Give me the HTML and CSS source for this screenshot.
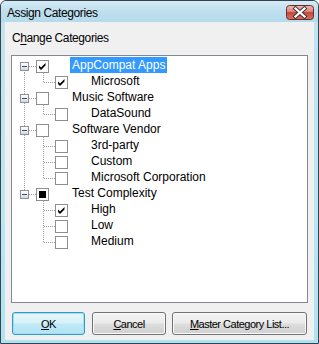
FILE: index.html
```html
<!DOCTYPE html>
<html>
<head>
<meta charset="utf-8">
<title>Assign Categories</title>
<link rel="stylesheet" href="styles.css">
</head>
<body>
<div class="window">
  <div class="titlebar">
    <span class="title">Assign Categories</span>
    <span class="close">
      <svg width="28" height="15" viewBox="0 0 28 15">
        <defs>
          <linearGradient id="rg" x1="0" y1="0" x2="0" y2="1">
            <stop offset="0" stop-color="#f0bbb3"/>
            <stop offset="0.45" stop-color="#dc8378"/>
            <stop offset="0.5" stop-color="#c84a3e"/>
            <stop offset="1" stop-color="#d8705f"/>
          </linearGradient>
        </defs>
        <rect x="0.5" y="0.5" width="27" height="14" rx="3" ry="3" fill="url(#rg)" stroke="#6e2b27"/>
        <path d="M9.5 3.5 L18.5 11.5 M18.5 3.5 L9.5 11.5" stroke="#4a3a3a" stroke-width="4.2" stroke-linecap="square" fill="none"/>
        <path d="M9.5 3.5 L18.5 11.5 M18.5 3.5 L9.5 11.5" stroke="#ffffff" stroke-width="2.2" stroke-linecap="square" fill="none"/>
      </svg>
    </span>
  </div>
  <div class="client">
    <div class="label">C<u>h</u>ange Categories</div>
    <div class="tree">
      <div class="row">
        <span class="ga first"><span class="exp"></span></span>
        <span class="cb"><svg class="chk" width="11" height="11" viewBox="0 0 11 11"><polygon points="2,4.5 4,6.5 8.5,2 8.5,4.5 4,9 2,7"/></svg></span>
        <span class="txt sel">AppCompat Apps</span>
      </div>
      <div class="row">
        <span class="ga cont"></span>
        <span class="gb last"></span>
        <span class="cb"><svg class="chk" width="11" height="11" viewBox="0 0 11 11"><polygon points="2,4.5 4,6.5 8.5,2 8.5,4.5 4,9 2,7"/></svg></span>
        <span class="txt">Microsoft</span>
      </div>
      <div class="row">
        <span class="ga mid"><span class="exp"></span></span>
        <span class="cb"></span>
        <span class="txt">Music Software</span>
      </div>
      <div class="row">
        <span class="ga cont"></span>
        <span class="gb last"></span>
        <span class="cb"></span>
        <span class="txt">DataSound</span>
      </div>
      <div class="row">
        <span class="ga mid"><span class="exp"></span></span>
        <span class="cb"></span>
        <span class="txt">Software Vendor</span>
      </div>
      <div class="row">
        <span class="ga cont"></span>
        <span class="gb mid"></span>
        <span class="cb"></span>
        <span class="txt">3rd-party</span>
      </div>
      <div class="row">
        <span class="ga cont"></span>
        <span class="gb mid"></span>
        <span class="cb"></span>
        <span class="txt">Custom</span>
      </div>
      <div class="row">
        <span class="ga cont"></span>
        <span class="gb last"></span>
        <span class="cb"></span>
        <span class="txt">Microsoft Corporation</span>
      </div>
      <div class="row">
        <span class="ga last"><span class="exp"></span></span>
        <span class="cb"><span class="ind"></span></span>
        <span class="txt">Test Complexity</span>
      </div>
      <div class="row">
        <span class="ga"></span>
        <span class="gb mid"></span>
        <span class="cb"><svg class="chk" width="11" height="11" viewBox="0 0 11 11"><polygon points="2,4.5 4,6.5 8.5,2 8.5,4.5 4,9 2,7"/></svg></span>
        <span class="txt">High</span>
      </div>
      <div class="row">
        <span class="ga"></span>
        <span class="gb mid"></span>
        <span class="cb"></span>
        <span class="txt">Low</span>
      </div>
      <div class="row">
        <span class="ga"></span>
        <span class="gb last"></span>
        <span class="cb"></span>
        <span class="txt">Medium</span>
      </div>
    </div>
    <div class="buttons">
      <span class="btn default ok"><u>O</u>K</span>
      <span class="btn cancel"><u>C</u>ancel</span>
      <span class="btn master"><u>M</u>aster Category List...</span>
    </div>
  </div>
</div>
</body>
</html>
```
FILE: styles.css
```css
:root {
  --d: #a0a0a0;
  --hA: repeating-linear-gradient(90deg, var(--d) 0 1px, transparent 1px 2px) 17px 9px / 7px 1px no-repeat;
  --vAfull: repeating-linear-gradient(180deg, var(--d) 0 1px, transparent 1px 2px) 12px 0 / 1px 16px no-repeat;
  --vAtop: repeating-linear-gradient(180deg, var(--d) 0 1px, transparent 1px 2px) 12px 0 / 1px 10px no-repeat;
  --vAbot: repeating-linear-gradient(180deg, var(--d) 0 1px, transparent 1px 2px) 12px 9px / 1px 7px no-repeat;
  --hB: repeating-linear-gradient(90deg, var(--d) 0 1px, transparent 1px 2px) 8px 9px / 11px 1px no-repeat;
  --vBfull: repeating-linear-gradient(180deg, var(--d) 0 1px, transparent 1px 2px) 7px 0 / 1px 16px no-repeat;
  --vBtop: repeating-linear-gradient(180deg, var(--d) 0 1px, transparent 1px 2px) 7px 0 / 1px 10px no-repeat;
}

html, body {
  margin: 0;
  padding: 0;
  background: #ffffff;
}

.window {
  width: 319px;
  height: 344px;
  box-sizing: border-box;
  border: 1px solid #34434d;
  border-radius: 6px 6px 0 0;
  background: linear-gradient(180deg, #c3e2f0 0%, #bce6f2 60%, #aee3f1 100%);
  display: flex;
  flex-direction: column;
  font-family: "Liberation Sans", Arial, sans-serif;
  font-size: 12px;
  color: #000;
  overflow: hidden;
}

.titlebar {
  height: 21px;
  flex: none;
  display: flex;
  align-items: flex-start;
  background: linear-gradient(180deg, #d4ebf6 0%, #bfdfee 50%, #b5dbeb 100%);
  border-radius: 5px 5px 0 0;
}

.title {
  padding: 5px 0 0 6px;
  line-height: 14px;
  letter-spacing: -0.4px;
  color: #000;
}

.close {
  margin: 4px 4px 0 auto;
  width: 28px;
  height: 15px;
  display: block;
}

.close svg {
  display: block;
}

.client {
  flex: 1;
  margin: 0 4px 3px 4px;
  background: #f0f0f0;
  padding: 9px 6px 5px 6px;
  display: flex;
  flex-direction: column;
}

.label {
  line-height: 14px;
  height: 14px;
  margin: 0 0 10px 1px;
  letter-spacing: -0.4px;
}

.label u {
  text-decoration: underline;
  text-underline-offset: 2px;
}

.tree {
  height: 248px;
  box-sizing: border-box;
  border: 1px solid #828790;
  background: #ffffff;
  padding-top: 1px;
  display: flex;
  flex-direction: column;
}

.row {
  display: flex;
  align-items: flex-start;
  height: 16px;
}

.ga, .gb {
  flex: none;
  height: 16px;
  box-sizing: border-box;
}

.ga {
  width: 24px;
  padding: 5px 0 0 8px;
}

.gb {
  width: 19px;
}

.ga.first { background: var(--hA), var(--vAbot); }
.ga.mid { background: var(--hA), var(--vAfull); }
.ga.last { background: var(--hA), var(--vAtop); }
.ga.cont { background: var(--vAfull); }

.gb.mid { background: var(--hB), var(--vBfull); }
.gb.last { background: var(--hB), var(--vBtop); }

.exp {
  display: block;
  width: 9px;
  height: 9px;
  box-sizing: border-box;
  border: 1px solid #8e9196;
  background:
    linear-gradient(#1d4f9c, #1d4f9c) center / 5px 1px no-repeat,
    linear-gradient(180deg, #ffffff 0%, #eeeeee 50%, #d6d6d6 100%);
}

.cb {
  flex: none;
  width: 13px;
  height: 13px;
  margin-top: 3px;
  box-sizing: border-box;
  border: 1px solid #8f8f8f;
  background: #ffffff;
}

.chk {
  display: block;
  fill: #000;
}

.ind {
  display: block;
  width: 7px;
  height: 7px;
  margin: 2px 0 0 2px;
  background: #000;
}

.txt {
  margin-left: 21px;
  padding: 0 2px;
  height: 16px;
  line-height: 16px;
  white-space: nowrap;
}

.txt.sel {
  background: #3399ff;
  color: #ffffff;
}

.buttons {
  margin-top: 9px;
  height: 23px;
  display: flex;
  flex: none;
}

.btn {
  height: 23px;
  box-sizing: border-box;
  border: 1px solid #707070;
  border-radius: 3px;
  background: linear-gradient(180deg, #f2f2f2 0%, #ebebeb 48%, #dddddd 52%, #cfcfcf 100%);
  box-shadow: inset 0 0 0 1px #fbfbfb;
  display: flex;
  align-items: center;
  justify-content: center;
  font-size: 11px;
  letter-spacing: -0.5px;
  color: #000;
}

.btn u {
  text-decoration: underline;
  text-underline-offset: 1px;
}

.btn.default {
  border-color: #3298c8;
  background: linear-gradient(180deg, #e8f7fc 0%, #d6f1fa 48%, #c0e9f7 52%, #b2e3f4 100%);
  box-shadow: inset 0 0 0 1px #9fe0f6;
}

.ok {
  margin-left: 1px;
  width: 73px;
}

.cancel {
  margin-left: 7px;
  width: 74px;
}

.master {
  margin-left: 6px;
  width: 135px;
}
```
